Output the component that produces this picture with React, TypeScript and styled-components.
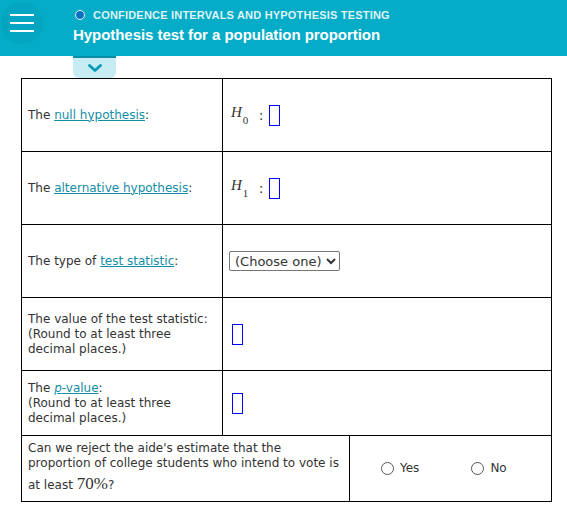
import React from "react";
import styled, { createGlobalStyle } from "styled-components";

const Global = createGlobalStyle`
  html, body { margin: 0; padding: 0; background: #fff; }
  body { font-family: "DejaVu Sans", Verdana, sans-serif; }
`;

const Header = styled.header`
  height: 56px;
  background: #04acc7;
  display: flex;
  align-items: flex-start;
`;

const MenuButton = styled.div`
  width: 42px;
  height: 42px;
  margin: 2px 0 0 1px;
  border-radius: 50%;
  background: rgba(0, 0, 0, 0.035);
  display: flex;
  flex-direction: column;
  justify-content: center;
  align-items: center;
  gap: 6px;
`;

const MenuLine = styled.span`
  display: block;
  width: 24px;
  height: 2px;
  background: #fff;
`;

const HeaderText = styled.div`
  margin-left: 30px;
  padding-top: 8px;
  font-family: "Liberation Sans", Arial, sans-serif;
  font-weight: bold;
`;

const Topic = styled.div`
  display: flex;
  align-items: center;
  gap: 8px;
  padding-left: 2px;
  font-size: 11px;
  color: #dff3f7;
  height: 14px;
  letter-spacing: 0.2px;
`;

const TopicDot = styled.span`
  width: 10px;
  height: 10px;
  border-radius: 50%;
  background: #0a6fc2;
  border: 1.5px solid #e8f6fa;
  box-sizing: border-box;
`;

const Title = styled.div`
  margin-top: 4px;
  font-size: 15px;
  color: #fff;
  letter-spacing: -0.05px;
`;

const TabRow = styled.div`
  padding-left: 73px;
  height: 22px;
`;

const Tab = styled.div`
  width: 43px;
  height: 22px;
  box-sizing: border-box;
  background: #c8ecf3;
  border-top: 2px solid #0b8fa8;
  border-radius: 0 0 6px 6px;
  display: flex;
  justify-content: center;
  align-items: center;
`;

const Table = styled.table`
  margin-left: 21px;
  width: 530px;
  border-collapse: collapse;
  table-layout: fixed;
  font-size: 12px;
  color: #333;
  line-height: 15px;
`;

const Row = styled.tr<{ $h: number }>`
  height: ${(p) => p.$h}px;
`;

const Cell = styled.td`
  border: 1px solid #000;
  padding: 0 6px;
  vertical-align: middle;
`;

const Link = styled.a`
  color: #138ea6;
  text-decoration: underline;
`;

const MathRow = styled.div<{ $indent?: number }>`
  display: flex;
  align-items: center;
  padding-left: ${(p) => p.$indent ?? 0}px;
  font-family: "Liberation Serif", "Times New Roman", serif;
  color: #333;
`;

const MathH = styled.span`
  font-style: italic;
  font-size: 15px;
  position: relative;
  top: -3px;
`;

const Sub = styled.span`
  font-size: 11px;
  position: relative;
  top: 5px;
  margin-left: 1px;
`;

const Colon = styled.span`
  margin: 0 6px 0 11px;
  font-size: 14px;
`;

const AnswerBox = styled.span`
  display: inline-block;
  width: 11px;
  height: 21px;
  box-sizing: border-box;
  border: 1px solid #0000ff;
`;

const Select = styled.select`
  font-family: "DejaVu Sans", Verdana, sans-serif;
  font-size: 13px;
  color: #333;
  height: 20px;
  padding: 0 1px;
  border: 1px solid #767676;
  border-radius: 2px;
  background: #fff;
`;

const Radios = styled.div`
  display: flex;
  padding-left: 25px;
  gap: 52px;
`;

const RadioLabel = styled.label`
  display: flex;
  align-items: center;
  gap: 6px;
  font-size: 12px;
  color: #333;
`;

const RadioCircle = styled.span`
  width: 13px;
  height: 13px;
  border-radius: 50%;
  border: 1px solid #555;
  box-sizing: border-box;
`;

const QuestionCell = styled(Cell)`
  padding-top: 5px;
  padding-bottom: 4px;
`;

const Percent = styled.span`
  font-family: "Liberation Serif", "Times New Roman", serif;
  font-size: 17px;
  line-height: 26px;
`;

export default function App() {
  return (
    <>
      <Global />
      <Header>
        <MenuButton>
          <MenuLine />
          <MenuLine />
          <MenuLine />
        </MenuButton>
        <HeaderText>
          <Topic>
            <TopicDot />
            CONFIDENCE INTERVALS AND HYPOTHESIS TESTING
          </Topic>
          <Title>Hypothesis test for a population proportion</Title>
        </HeaderText>
      </Header>
      <TabRow>
        <Tab>
          <svg width="16" height="10" viewBox="0 0 16 10">
            <path d="M2.5 2.5 L8 7.5 L13.5 2.5" fill="none" stroke="#0b9db8" strokeWidth="3" strokeLinecap="round" strokeLinejoin="round" />
          </svg>
        </Tab>
      </TabRow>
      <Table>
        <colgroup>
          <col style={{ width: 201 }} />
          <col style={{ width: 127 }} />
          <col style={{ width: 202 }} />
        </colgroup>
        <tbody>
          <Row $h={73}>
            <Cell>
              The <Link>null hypothesis</Link>:
            </Cell>
            <Cell colSpan={2}>
              <MathRow $indent={2}>
                <MathH>H</MathH>
                <Sub>0</Sub>
                <Colon>:</Colon>
                <AnswerBox />
              </MathRow>
            </Cell>
          </Row>
          <Row $h={73}>
            <Cell>
              The <Link>alternative hypothesis</Link>:
            </Cell>
            <Cell colSpan={2}>
              <MathRow $indent={2}>
                <MathH>H</MathH>
                <Sub>1</Sub>
                <Colon>:</Colon>
                <AnswerBox />
              </MathRow>
            </Cell>
          </Row>
          <Row $h={73}>
            <Cell>
              The type of <Link>test statistic</Link>:
            </Cell>
            <Cell colSpan={2}>
              <Select defaultValue="">
                <option value="">(Choose one)</option>
                <option value="z">Z</option>
                <option value="t">t</option>
              </Select>
            </Cell>
          </Row>
          <Row $h={73}>
            <Cell>
              The value of the test statistic:
              <br />
              (Round to at least three decimal places.)
            </Cell>
            <Cell colSpan={2}>
              <MathRow $indent={3}>
                <AnswerBox />
              </MathRow>
            </Cell>
          </Row>
          <Row $h={65}>
            <Cell>
              The <Link><i>p</i>-value</Link>:
              <br />
              (Round to at least three decimal places.)
            </Cell>
            <Cell colSpan={2}>
              <MathRow $indent={3}>
                <AnswerBox />
              </MathRow>
            </Cell>
          </Row>
          <Row $h={66}>
            <QuestionCell colSpan={2}>
              Can we reject the aide's estimate that the proportion of college students who intend to vote is at least{" "}
              <Percent>70%</Percent>?
            </QuestionCell>
            <Cell>
              <Radios>
                <RadioLabel>
                  <RadioCircle />
                  Yes
                </RadioLabel>
                <RadioLabel>
                  <RadioCircle />
                  No
                </RadioLabel>
              </Radios>
            </Cell>
          </Row>
        </tbody>
      </Table>
    </>
  );
}
